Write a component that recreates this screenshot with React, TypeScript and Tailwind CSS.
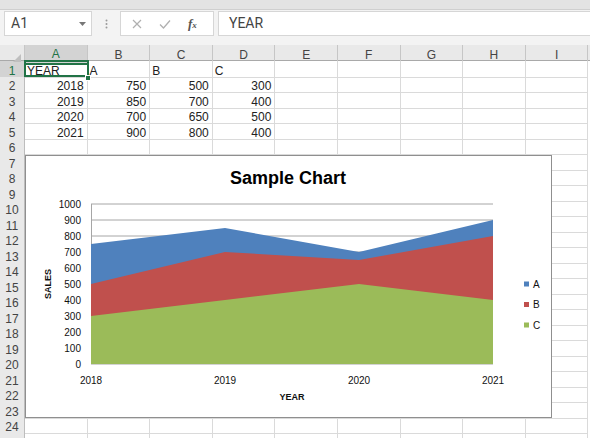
import React from "react";

const COLS = ["A", "B", "C", "D", "E", "F", "G", "H", "I"];
const DATA: (string | number)[][] = [
  ["YEAR", "A", "B", "C"],
  [2018, 750, 500, 300],
  [2019, 850, 700, 400],
  [2020, 700, 650, 500],
  [2021, 900, 800, 400],
];

const X0 = 91;
const XS = 134;
const yv = (v: number) => 364 - v * 0.16;

function areaPoints(vals: number[]) {
  const top = vals.map((v, i) => `${X0 + i * XS},${yv(v)}`).join(" ");
  return `${top} ${X0 + 3 * XS},364 ${X0},364`;
}

function Chart() {
  const grid = [0, 100, 200, 300, 400, 500, 600, 700, 800, 900, 1000];
  const years = ["2018", "2019", "2020", "2021"];
  const f = "'Liberation Sans', Arial, sans-serif";
  return (
    <div className="absolute left-[25px] top-[110px] w-[527px] h-[263px] bg-white border border-[#8f8f8f]">
      <svg width={525} height={261} viewBox="26 156 525 261" className="block">
        {grid.map((g) => (
          <line key={g} x1={X0} x2={493} y1={yv(g)} y2={yv(g)} stroke="#a6a6a6" strokeWidth={1} />
        ))}
        <line x1={X0 + 0.5} x2={X0 + 0.5} y1={204} y2={364} stroke="#a6a6a6" strokeWidth={1} />
        <polygon points={areaPoints([750, 850, 700, 900])} fill="#4f81bd" />
        <polygon points={areaPoints([500, 700, 650, 800])} fill="#c0504d" />
        <polygon points={areaPoints([300, 400, 500, 400])} fill="#9bbb59" />
        <text x={288} y={178} dy="0.35em" textAnchor="middle" fontFamily={f} fontWeight={700} fontSize={18} fill="#000">
          Sample Chart
        </text>
        {grid.map((g) => (
          <text key={g} x={81} y={yv(g)} dy="0.35em" textAnchor="end" fontFamily={f} fontSize={10} fill="#111">
            {g}
          </text>
        ))}
        {years.map((y, i) => (
          <text key={y} x={X0 + i * XS} y={380} dy="0.35em" textAnchor="middle" fontFamily={f} fontSize={10} fill="#111">
            {y}
          </text>
        ))}
        <text x={292} y={397} dy="0.35em" textAnchor="middle" fontFamily={f} fontWeight={700} fontSize={9} fill="#111">
          YEAR
        </text>
        <text
          x={0}
          y={0}
          dy="0.35em"
          textAnchor="middle"
          fontFamily={f}
          fontWeight={700}
          fontSize={9}
          fill="#111"
          transform="translate(47.5 284) rotate(-90)"
        >
          SALES
        </text>
        {[
          ["A", "#4f81bd", 284],
          ["B", "#c0504d", 304.5],
          ["C", "#9bbb59", 325],
        ].map(([l, c, y]) => (
          <g key={l as string}>
            <rect x={524} y={(y as number) - 2.5} width={5} height={5} fill={c as string} />
            <text x={533} y={y as number} dy="0.35em" fontFamily={f} fontSize={10} fill="#111">
              {l}
            </text>
          </g>
        ))}
      </svg>
    </div>
  );
}

export default function App() {
  const rows = Array.from({ length: 25 }, (_, i) => i + 1);
  return (
    <div
      className="w-[590px] h-[438px] overflow-hidden bg-white text-[#333] flex flex-col"
      style={{ fontFamily: "'Liberation Sans', Arial, sans-serif" }}
    >
      {/* top ribbon edge */}
      <div className="h-[10px] bg-[#e3e3e3] border-b border-[#cfcfcf] shrink-0" />
      {/* formula bar */}
      <div className="h-[35px] bg-[#f3f3f3] shrink-0 flex items-start pt-[1px] pl-[4px] gap-0">
        <div className="w-[88px] h-[25px] bg-white border border-[#d6d6d6] flex items-center pl-[6px] pr-[5px]">
          <span className="text-[14px] text-[#444]" style={{ fontFamily: "Roboto, sans-serif" }}>
            A1
          </span>
          <svg width="7" height="4" className="ml-auto" viewBox="0 0 7 4">
            <polygon points="0,0 7,0 3.5,4" fill="#777" />
          </svg>
        </div>
        <div className="w-[28px] h-[25px] flex items-center justify-center">
          <svg width="3" height="10" viewBox="0 0 3 10">
            <circle cx="1.5" cy="1.5" r="1" fill="#9a9a9a" />
            <circle cx="1.5" cy="5" r="1" fill="#9a9a9a" />
            <circle cx="1.5" cy="8.5" r="1" fill="#9a9a9a" />
          </svg>
        </div>
        <div className="w-[94px] h-[25px] bg-white border border-[#d6d6d6] flex items-center">
          <svg width="10" height="10" viewBox="0 0 10 10" className="ml-[11px]">
            <path d="M1 1 L9 9 M9 1 L1 9" stroke="#b0b0b0" strokeWidth="1.2" />
          </svg>
          <svg width="12" height="10" viewBox="0 0 12 10" className="ml-[17px]">
            <path d="M1 5.5 L4.5 9 L11 1.5" stroke="#b0b0b0" strokeWidth="1.3" fill="none" />
          </svg>
          <span
            className="ml-[17px] italic text-[13px] text-[#555] font-bold"
            style={{ fontFamily: "'Liberation Serif', serif" }}
          >
            f<span className="text-[9px]">x</span>
          </span>
        </div>
        <div className="ml-[4px] flex-1 h-[25px] bg-white border border-[#d6d6d6] border-r-0 flex items-center pl-[10px]">
          <span className="text-[14px] text-[#444]" style={{ fontFamily: "Roboto, sans-serif" }}>
            YEAR
          </span>
        </div>
      </div>
      {/* sheet */}
      <div className="relative flex-1">
        <div className="grid grid-cols-[25px_repeat(9,62.6px)] h-[16px] bg-[#e9e9e9] border-b border-[#a9a9a9]">
          <div className="relative border-r border-[#c6c6c6]">
            <svg width="8" height="8" viewBox="0 0 8 8" className="absolute right-[3px] bottom-[3px]">
              <polygon points="8,0 8,8 0,8" fill="#bfbfbf" />
            </svg>
          </div>
          {COLS.map((c, j) => (
            <div
              key={c}
              className={
                j === 0
                  ? "bg-[#d3d3d3] text-[#217346] border-r border-[#c6c6c6] border-b-2 border-b-[#217346] flex items-center justify-center text-[12px]"
                  : "text-[#444] border-r border-[#c6c6c6] flex items-center justify-center text-[12px]"
              }
            >
              {c}
            </div>
          ))}
        </div>
        {rows.map((r) => (
          <div key={r} className="grid grid-cols-[25px_repeat(9,62.6px)] h-[15.52px]">
            <div
              className={
                r === 1
                  ? "bg-[#d3d3d3] text-[#217346] border-r border-b border-r-[#bdbdbd] border-b-[#cfcfcf] flex items-start pt-[3.5px] justify-center text-[12px] leading-none"
                  : "bg-[#e9e9e9] text-[#444] border-r border-b border-r-[#bdbdbd] border-b-[#cfcfcf] flex items-start pt-[3.5px] justify-center text-[12px] leading-none"
              }
            >
              {r <= 24 ? r : ""}
            </div>
            {COLS.map((c, j) => {
              const v = DATA[r - 1]?.[j];
              const isNum = typeof v === "number";
              return (
                <div
                  key={c}
                  className={
                    isNum
                      ? "border-r border-b border-[#dadada] flex items-start pt-[3.5px] justify-end pr-[3px] text-[12px] leading-none text-[#222]"
                      : "border-r border-b border-[#dadada] flex items-start pt-[3.5px] pl-[2px] text-[12px] leading-none text-[#222]"
                  }
                >
                  {v ?? ""}
                </div>
              );
            })}
          </div>
        ))}
        {/* selection */}
        <div className="absolute left-[24px] top-[15px] w-[65px] h-[17px] border-2 border-[#217346] pointer-events-none" />
        <div className="absolute left-[85px] top-[30px] w-[6px] h-[6px] bg-[#217346] border border-white" />
        <Chart />
      </div>
    </div>
  );
}
